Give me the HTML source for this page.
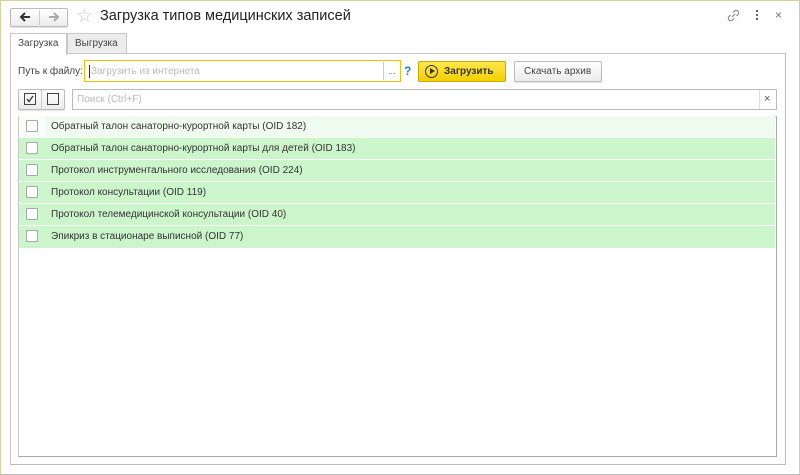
<!DOCTYPE html>
<html><head><meta charset="utf-8"><style>
*{box-sizing:border-box;margin:0;padding:0}
body{width:800px;height:475px;background:#fff;font-family:"Liberation Sans",sans-serif;font-size:10px;color:#333;position:relative;overflow:hidden}
.a{position:absolute}
.btn{position:absolute;border:1px solid #bbb;border-radius:2px;background:linear-gradient(#fff,#ececec);box-shadow:0 1px 1px rgba(0,0,0,.12)}
.row{position:absolute;left:19px;width:756px;height:22px;background:#ccf5cc;border-top:1px solid #fff}
.row .cb{position:absolute;left:7px;top:4px;width:12px;height:12px;border:1px solid #aaa;background:#fff;border-radius:1px}
.row span{position:absolute;left:32px;top:5px;font-size:10px;color:#333}
</style></head><body>
<div class="a" style="left:0;top:0;width:800px;height:475px;border:1px solid #d8d09c;border-bottom-color:#bbb"></div>
<div class="btn" style="left:10px;top:8px;width:58px;height:19px"></div>
<div class="a" style="left:39px;top:10px;width:1px;height:15px;background:#ccc"></div>
<svg class="a" style="left:18px;top:11px" width="14" height="12" viewBox="0 0 14 12"><path d="M12 6H3M7 2L3 6L7 10" stroke="#333" stroke-width="2" fill="none"/></svg>
<svg class="a" style="left:47px;top:11px" width="14" height="12" viewBox="0 0 14 12"><path d="M2 6H11M7 2L11 6L7 10" stroke="#aaa" stroke-width="2" fill="none"/></svg>
<div class="a" style="left:76px;top:5px;font-size:19px;color:#ccc">☆</div>
<div class="a" style="left:100px;top:8px;font-size:14.5px;color:#222">Загрузка типов медицинских записей</div>
<svg class="a" style="left:727px;top:9px" width="13" height="13" viewBox="0 0 13 13"><path d="M5 8L8 5M6 3.5L7.5 2a2.1 2.1 0 0 1 3.5 3.5L9.5 7M7 9.5L5.5 11a2.1 2.1 0 0 1-3.5-3.5L3.5 6" stroke="#888" stroke-width="1.2" fill="none"/></svg>
<div class="a" style="left:756px;top:10px;width:2px;height:2px;background:#666"></div>
<div class="a" style="left:756px;top:14px;width:2px;height:2px;background:#666"></div>
<div class="a" style="left:756px;top:18px;width:2px;height:2px;background:#666"></div>
<div class="a" style="left:775px;top:8px;font-size:12px;color:#777">×</div>
<div class="a" style="left:67px;top:33px;width:60px;height:21px;background:#ececec;border:1px solid #c8c8c8"></div>
<div class="a" style="left:75px;top:38px;color:#444">Выгрузка</div>
<div class="a" style="left:10px;top:53px;width:776px;height:412px;border:1px solid #c8c8c8;border-right-color:#bbb;border-bottom-color:#bbb"></div>
<div class="a" style="left:10px;top:33px;width:57px;height:22px;background:#fff;border:1px solid #c8c8c8;border-bottom:none"></div>
<div class="a" style="left:18px;top:38px;color:#444">Загрузка</div>
<div class="a" style="left:18px;top:66px;color:#444">Путь к файлу:</div>
<div class="a" style="left:84px;top:60px;width:317px;height:22px;border:1px solid #f0c000;background:#fff"></div>
<div class="a" style="left:89px;top:65px;width:1px;height:13px;background:#333"></div>
<div class="a" style="left:91px;top:66px;color:#bbb">Загрузить из интернета</div>
<div class="a" style="left:383px;top:62px;width:1px;height:18px;background:#ccc"></div>
<div class="a" style="left:388px;top:66px;color:#888;font-size:9px">...</div>
<div class="a" style="left:404px;top:64px;color:#2a7fc9;font-weight:bold;font-size:12px">?</div>
<div class="a" style="left:418px;top:61px;width:88px;height:21px;border:1px solid #c9a800;border-radius:2px;background:linear-gradient(#ffe84a,#f3d000)"></div>
<div class="a" style="left:425px;top:65px;width:13px;height:13px;border:1px solid #333;border-radius:50%"></div>
<div class="a" style="left:430px;top:68px;width:0;height:0;border-left:5px solid #333;border-top:3.5px solid transparent;border-bottom:3.5px solid transparent"></div>
<div class="a" style="left:444px;top:66px;font-weight:bold;color:#333">Загрузить</div>
<div class="btn" style="left:514px;top:61px;width:88px;height:21px"></div>
<div class="a" style="left:524px;top:66px;color:#444">Скачать архив</div>
<div class="btn" style="left:18px;top:89px;width:47px;height:21px"></div>
<div class="a" style="left:41px;top:90px;width:1px;height:19px;background:#ccc"></div>
<div class="a" style="left:24px;top:93px;width:12px;height:12px;border:1px solid #444"></div>
<svg class="a" style="left:26px;top:95px" width="8" height="8" viewBox="0 0 8 8"><path d="M1 4L3 6.5L7 1" stroke="#333" stroke-width="1.3" fill="none"/></svg>
<div class="a" style="left:47px;top:93px;width:12px;height:12px;border:1px solid #444"></div>
<div class="a" style="left:72px;top:89px;width:705px;height:21px;border:1px solid #bbb;background:#fff"></div>
<div class="a" style="left:759px;top:90px;width:1px;height:19px;background:#ddd"></div>
<div class="a" style="left:764px;top:93px;color:#555;font-size:11px">×</div>
<div class="a" style="left:77px;top:94px;color:#bbb">Поиск (Ctrl+F)</div>
<div class="a" style="left:18px;top:116px;width:759px;height:341px;border:1px solid #c8c8c8;border-right-color:#aaa;border-bottom-color:#aaa"></div>
<div class="row" style="top:116px;background:#f0fbf0;border-top:none"><div class="a" style="left:0;top:0;width:26px;height:22px;background:#f7fdf7"></div><div class="cb"></div><span>Обратный талон санаторно-курортной карты (OID 182)</span></div>
<div class="row" style="top:137px"><div class="cb"></div><span>Обратный талон санаторно-курортной карты для детей (OID 183)</span></div>
<div class="row" style="top:159px"><div class="cb"></div><span>Протокол инструментального исследования (OID 224)</span></div>
<div class="row" style="top:181px"><div class="cb"></div><span>Протокол консультации (OID 119)</span></div>
<div class="row" style="top:203px"><div class="cb"></div><span>Протокол телемедицинской консультации (OID 40)</span></div>
<div class="row" style="top:225px;height:23px"><div class="cb"></div><span>Эпикриз в стационаре выписной (OID 77)</span></div>
</body></html>
